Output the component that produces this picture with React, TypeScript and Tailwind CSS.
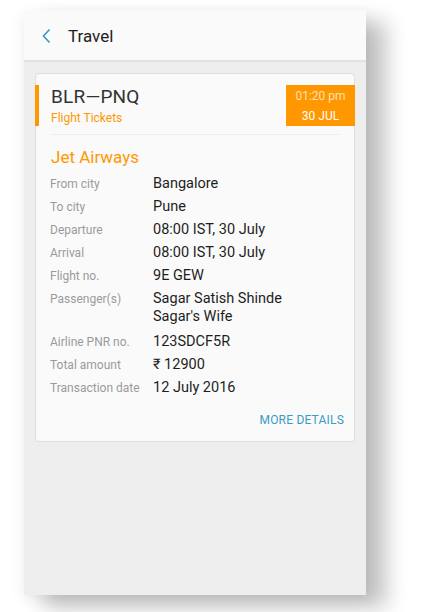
import React from "react";

const rows: { label: string; value: string[] }[] = [
  { label: "From city", value: ["Bangalore"] },
  { label: "To city", value: ["Pune"] },
  { label: "Departure", value: ["08:00 IST, 30 July"] },
  { label: "Arrival", value: ["08:00 IST, 30 July"] },
  { label: "Flight no.", value: ["9E GEW"] },
  { label: "Passenger(s)", value: ["Sagar Satish Shinde", "Sagar's Wife"] },
  { label: "Airline PNR no.", value: ["123SDCF5R"] },
  { label: "Total amount", value: ["₹ 12900"] },
  { label: "Transaction date", value: ["12 July 2016"] },
];

export default function App() {
  return (
    <div className="w-[421px] h-[612px] bg-white pl-[24px] pt-[10px]" style={{ fontFamily: "Roboto, 'Noto Sans', sans-serif" }}>
      <div className="w-[342px] h-[585px] bg-[#eeeeee] flex flex-col shadow-[20px_12px_20px_rgba(0,0,0,0.24),0_4px_14px_rgba(0,0,0,0.08)]">
        <div className="h-[52px] bg-[#fafafa] border-b-2 border-[#e2e2e2] flex items-center shrink-0">
          <svg width="12" height="16" viewBox="0 0 12 16" className="ml-[17px] mt-[2px]">
            <path d="M8.5 1.5 L2.5 8 L8.5 14.5" fill="none" stroke="#3a96c2" strokeWidth="1.6" />
          </svg>
          <span className="ml-[15px] mt-[2px] text-[17px] text-[#212121] leading-none">Travel</span>
        </div>
        <div className="px-[11px] pt-[11px]">
          <div className="bg-[#fafafa] border border-[#dedede] rounded-[4px] pt-[11px] pb-[15px]">
            <div className="flex items-stretch h-[41px]">
              <div className="w-[4px] bg-[#ff9800] -ml-px"></div>
              <div className="flex-1 pl-[12px] flex flex-col justify-between">
                <div className="text-[19px] leading-none text-[#333] mt-[2px] tracking-[0.2px]">BLR—PNQ</div>
                <div className="text-[12px] leading-none text-[#ff9800] mb-[2px]">Flight Tickets</div>
              </div>
              <div className="w-[69px] bg-[#ff9800] -mr-px flex flex-col items-center justify-center gap-[8px]">
                <div className="text-[12px] leading-none text-[#ffe0b0]">01:20 pm</div>
                <div className="text-[12px] leading-none text-white">30 JUL</div>
              </div>
            </div>
            <div className="mx-[15px] mt-[8px] border-t border-[#ececec]"></div>
            <div className="pl-[15px] pt-[14px] text-[17px] leading-none text-[#ff9800]">Jet Airways</div>
            <div className="mt-[6px] flex flex-col">
              {rows.map((r) => (
                <div key={r.label} className="flex items-start">
                  <div className="w-[117px] pl-[14px] text-[12px] text-[#9a9a9a] h-[23px] leading-[22px] whitespace-nowrap pt-[1px]">{r.label}</div>
                  <div className="flex flex-col">
                    {r.value.map((v, i) => (
                      <div key={i} className={`text-[14.5px] text-[#1e1e1e] whitespace-nowrap ${i === 0 ? "leading-[23px]" : "leading-[20px] -mt-[3px] mb-[3px]"}`}>{v}</div>
                    ))}
                  </div>
                </div>
              ))}
            </div>
            <div className="flex justify-end pr-[10px] mt-[15px]">
              <span className="text-[12px] leading-none text-[#3a9bc4] tracking-[0.2px]">MORE DETAILS</span>
            </div>
          </div>
        </div>
      </div>
    </div>
  );
}
